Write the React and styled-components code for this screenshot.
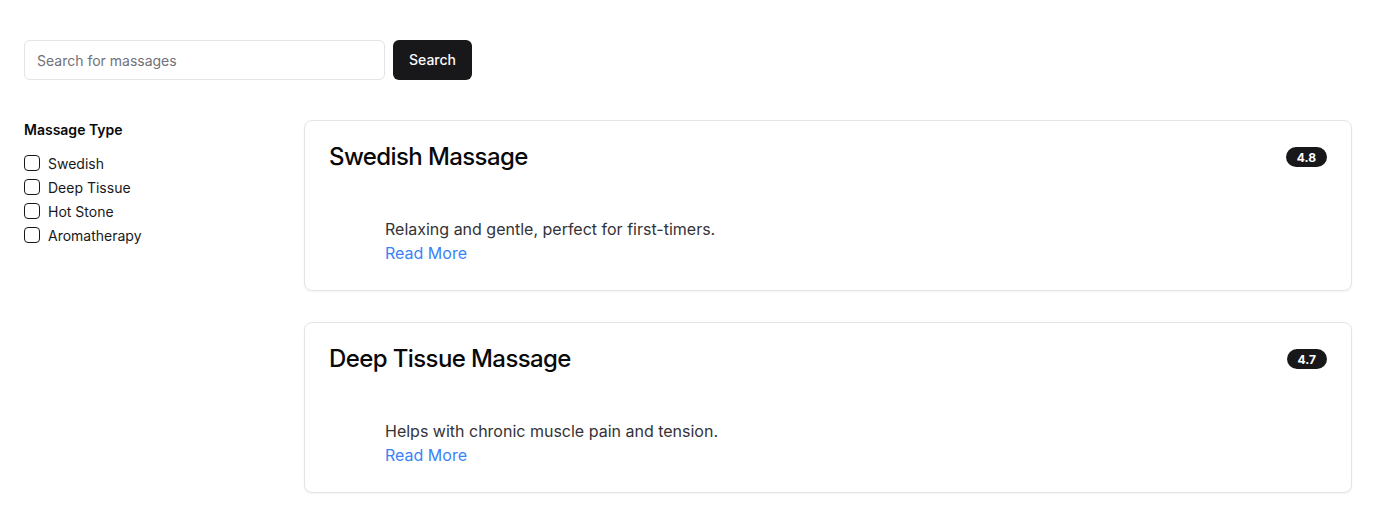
import styled, { createGlobalStyle } from 'styled-components'

const Global = createGlobalStyle`
  body {
    margin: 0;
    background: #ffffff;
    font-family: Inter, "Noto Sans", sans-serif;
    color: #09090b;
  }
  * { box-sizing: border-box; }
`

const Page = styled.div`
  padding: 40px 24px;
`

const SearchRow = styled.form`
  display: flex;
  gap: 8px;
  margin-bottom: 40px;
`

const SearchInput = styled.input`
  width: 361px;
  height: 40px;
  padding: 0 12px;
  border: 1px solid #e4e4e7;
  border-radius: 6px;
  font-family: inherit;
  font-size: 14px;
  color: #09090b;
  outline: none;
  &::placeholder { color: #71717a; }
`

const SearchButton = styled.button`
  height: 40px;
  padding: 0 16px 1px;
  border: none;
  border-radius: 6px;
  background: #18181b;
  color: #fafafa;
  font-family: inherit;
  font-size: 14px;
  font-weight: 500;
`

const Layout = styled.div`
  display: grid;
  grid-template-columns: 280px 1fr;
`

const Sidebar = styled.aside`
  padding-top: 0;
`

const SideTitle = styled.h3`
  margin: 0 0 11px;
  font-size: 14px;
  line-height: 20px;
  font-weight: 600;
  color: #09090b;
`

const Option = styled.label`
  display: flex;
  align-items: center;
  gap: 8px;
  height: 24px;
  font-size: 14px;
  color: #18181b;
`

const Box = styled.input.attrs({ type: 'checkbox' })`
  appearance: none;
  margin: 0;
  width: 16px;
  height: 16px;
  border: 1px solid #18181b;
  border-radius: 4px;
  background: #fff;
`

const List = styled.div`
  display: flex;
  flex-direction: column;
  gap: 31px;
`

const Card = styled.div`
  border: 1px solid #e4e4e7;
  border-radius: 8px;
  background: #fff;
  box-shadow: 0 1px 2px rgba(0, 0, 0, 0.05);
`

const CardHeader = styled.div`
  display: flex;
  justify-content: space-between;
  align-items: center;
  padding: 24px 24px 48px;
`

const CardTitle = styled.h2`
  margin: 0;
  font-size: 24px;
  line-height: 24px;
  font-weight: 500;
  letter-spacing: -0.6px;
  color: #09090b;
`

const Badge = styled.span`
  display: inline-flex;
  align-items: center;
  height: 20px;
  padding: 0 11px;
  border-radius: 999px;
  background: #18181b;
  color: #fff;
  font-size: 12px;
  font-weight: 700;
`

const CardBody = styled.div`
  display: flex;
  gap: 16px;
  padding: 0 24px 25px;
`

const Thumb = styled.div`
  width: 40px;
  flex-shrink: 0;
`

const Desc = styled.p`
  margin: 0;
  font-size: 16px;
  line-height: 24px;
  color: #333338;
`

const ReadMore = styled.a`
  display: block;
  font-size: 16px;
  line-height: 24px;
  color: #3b82f6;
  text-decoration: none;
`

const types = ['Swedish', 'Deep Tissue', 'Hot Stone', 'Aromatherapy']

const massages = [
  { name: 'Swedish Massage', rating: '4.8', text: 'Relaxing and gentle, perfect for first-timers.' },
  { name: 'Deep Tissue Massage', rating: '4.7', text: 'Helps with chronic muscle pain and tension.' },
]

export default function App() {
  return (
    <Page>
      <Global />
      <SearchRow onSubmit={(e) => e.preventDefault()}>
        <SearchInput placeholder="Search for massages" />
        <SearchButton type="submit">Search</SearchButton>
      </SearchRow>
      <Layout>
        <Sidebar>
          <SideTitle>Massage Type</SideTitle>
          {types.map((t) => (
            <Option key={t}>
              <Box />
              {t}
            </Option>
          ))}
        </Sidebar>
        <List>
          {massages.map((m) => (
            <Card key={m.name}>
              <CardHeader>
                <CardTitle>{m.name}</CardTitle>
                <Badge>{m.rating}</Badge>
              </CardHeader>
              <CardBody>
                <Thumb />
                <div>
                  <Desc>{m.text}</Desc>
                  <ReadMore href="#">Read More</ReadMore>
                </div>
              </CardBody>
            </Card>
          ))}
        </List>
      </Layout>
    </Page>
  )
}
